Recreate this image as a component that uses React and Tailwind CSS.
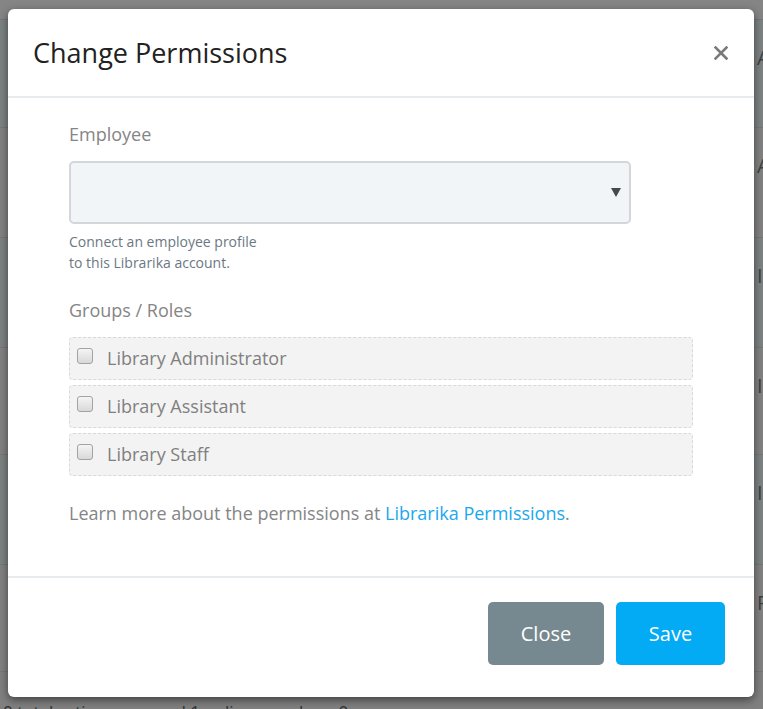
import { useState } from 'react';

const roles = ['Library Administrator', 'Library Assistant', 'Library Staff'];

// rows of the page that sits under the dimmed overlay
const backdropRows = [
  { h: 'h-[108px]', bg: 'bg-[#7d8282]', letter: 'A' },
  { h: 'h-[110px]', bg: 'bg-[#828282]', letter: 'A' },
  { h: 'h-[110px]', bg: 'bg-[#7d8282]', letter: 'I' },
  { h: 'h-[107px]', bg: 'bg-[#828282]', letter: 'I' },
  { h: 'h-[110px]', bg: 'bg-[#7d8282]', letter: 'I' },
  { h: 'h-[107px]', bg: 'bg-[#828282]', letter: 'P' },
];

function Checkbox({ checked, onChange }) {
  return (
    <button
      type="button"
      onClick={onChange}
      className="mt-[10px] ml-[7px] w-[16px] h-[16px] shrink-0 rounded-[3px] border border-[#a3a3a3] bg-gradient-to-b from-[#f4f4f4] to-[#d9d9d9] flex items-center justify-center"
    >
      {checked && (
        <svg width="11" height="11" viewBox="0 0 12 12">
          <path d="M2 6.5l2.5 2.5L10 3" fill="none" stroke="#333" strokeWidth="2" />
        </svg>
      )}
    </button>
  );
}

export default function App() {
  const [selected, setSelected] = useState([]);

  function toggleRole(role) {
    setSelected(prev =>
      prev.includes(role) ? prev.filter(r => r !== role) : [...prev, role]
    );
  }

  return (
    <div
      className="relative w-[763px] h-[709px] overflow-hidden bg-[#808080]"
      style={{ fontFamily: '"Open Sans", "Liberation Sans", sans-serif' }}
    >
      {/* page behind the overlay */}
      <div className="flex flex-col">
        <div className="h-[20px] bg-[#858585] border-b border-[#777]" />
        {backdropRows.map((row, i) => (
          <div
            key={i}
            className={`${row.h} ${row.bg} border-b border-[#767676] pl-[757px] pt-[26px] text-[20px] leading-[24px] text-[#3d4142]`}
          >
            {row.letter}
          </div>
        ))}
        <div className="pl-[3px] pt-[30px] text-[17px] leading-[20px] text-[#2f3233] whitespace-nowrap">
          0 total active users and 1 online members 0
        </div>
      </div>

      {/* modal */}
      <div className="absolute left-[8px] top-[9px] w-[746px] h-[688px] bg-white rounded-[6px] shadow-[0_3px_9px_rgba(0,0,0,0.5)] flex flex-col overflow-hidden">
        <div className="h-[89px] shrink-0 border-b-2 border-[#e7ebee] flex items-center justify-between pl-[25px] pr-[26px]">
          <h1 className="text-[27px] leading-[34px] font-normal text-[#222] mt-[1px]">Change Permissions</h1>
          <button type="button" className="mt-[1px]" aria-label="close">
            <svg width="14" height="14" viewBox="0 0 14 14">
              <path d="M1.5 1.5l11 11M12.5 1.5l-11 11" stroke="#7a7a7a" strokeWidth="2.6" strokeLinecap="square" />
            </svg>
          </button>
        </div>

        <div className="shrink-0 px-[61px] pt-[23px] pb-[49px] border-b-2 border-[#e7ebee]">
          <div className="text-[18px] leading-[27px] text-[#858585]">Employee</div>
          <div className="mt-[13px] w-[562px] h-[63px] rounded-[5px] border-2 border-[#d3d6db] bg-[#f2f5f8] flex items-center justify-end pr-[8px]">
            <svg width="10" height="9" viewBox="0 0 10 9">
              <path d="M0 0h10L5 9z" fill="#45484d" />
            </svg>
          </div>
          <div className="mt-[7px] text-[14px] leading-[21px] text-[#6b7883]">
            Connect an employee profile
            <br />
            to this Librarika account.
          </div>

          <div className="mt-[24px] text-[18px] leading-[27px] text-[#858585]">Groups / Roles</div>
          <div className="mt-[13px] flex flex-col gap-[5px]">
            {roles.map(role => (
              <label
                key={role}
                className="h-[43px] rounded-[4px] border border-dashed border-[#d9d9d9] bg-[#f3f3f3] flex items-start cursor-pointer"
              >
                <Checkbox checked={selected.includes(role)} onChange={() => toggleRole(role)} />
                <span className="ml-[14px] mt-[7px] text-[18px] leading-[27px] text-[#808080]">{role}</span>
              </label>
            ))}
          </div>

          <p className="mt-[24px] text-[18px] leading-[27px] text-[#858585]">
            Learn more about the permissions at{' '}
            <a href="#" className="text-[#1aa8ee]">Librarika Permissions</a>.
          </p>
        </div>

        <div className="flex justify-end gap-[12px] pt-[24px] pr-[29px]">
          <button type="button" className="w-[116px] h-[63px] rounded-[5px] bg-[#778990] text-white text-[20px]">
            Close
          </button>
          <button type="button" className="w-[109px] h-[63px] rounded-[5px] bg-[#03aaf4] text-white text-[20px]">
            Save
          </button>
        </div>
      </div>
    </div>
  );
}
